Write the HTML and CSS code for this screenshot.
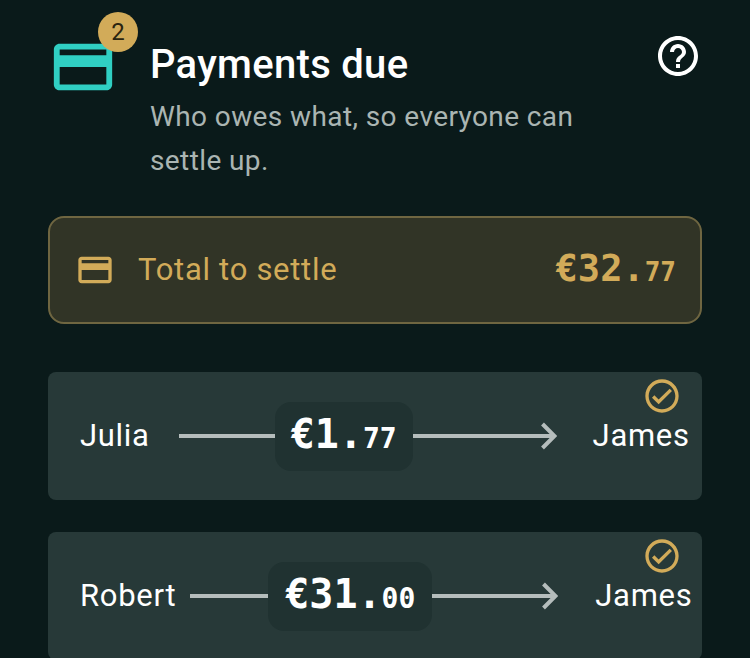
FILE: index.html
```html
<!DOCTYPE html>
<html>
<head>
    <title>Payments due</title>
    <link rel="stylesheet" href="styles.css">
</head>
<body>
    <div class="header">
        <div class="header-icon">
            <svg class="card-icon" viewBox="0 0 24 24" fill="#30cfc3"><path d="M20 4H4c-1.11 0-1.99.89-1.99 2L2 18c0 1.11.89 2 2 2h16c1.11 0 2-.89 2-2V6c0-1.11-.89-2-2-2zm0 14H4v-6h16v6zm0-10H4V6h16v2z"/></svg>
            <span class="badge">2</span>
        </div>
        <div class="header-text">
            <h1>Payments due</h1>
            <p>Who owes what, so everyone can settle up.</p>
        </div>
        <svg class="help-icon" viewBox="0 0 24 24" fill="#fff"><path d="M11 18h2v-2h-2v2zm1-16C6.48 2 2 6.48 2 12s4.48 10 10 10 10-4.48 10-10S17.52 2 12 2zm0 18c-4.41 0-8-3.59-8-8s3.59-8 8-8 8 3.59 8 8-3.59 8-8 8zm0-14c-2.21 0-4 1.79-4 4h2c0-1.1.9-2 2-2s2 .9 2 2c0 2-3 1.75-3 5h2c0-2.25 3-2.5 3-5 0-2.21-1.79-4-4-4z"/></svg>
    </div>

    <div class="total">
        <svg class="total-icon" viewBox="0 0 24 24" fill="#d2ab59"><path d="M20 4H4c-1.11 0-1.99.89-1.99 2L2 18c0 1.11.89 2 2 2h16c1.11 0 2-.89 2-2V6c0-1.11-.89-2-2-2zm0 14H4v-6h16v6zm0-10H4V6h16v2z"/></svg>
        <span class="total-label">Total to settle</span>
        <span class="total-amount">€32.<small>77</small></span>
    </div>

    <div class="payment payment-julia">
        <svg class="check" viewBox="0 0 24 24" fill="#d2ab59"><path d="M12 2C6.48 2 2 6.48 2 12s4.48 10 10 10 10-4.48 10-10S17.52 2 12 2zm0 18c-4.41 0-8-3.59-8-8s3.59-8 8-8 8 3.59 8 8-3.59 8-8 8zm4.59-12.42L10 14.17l-2.59-2.58L6 13l4 4 8-8z"/></svg>
        <span class="name">Julia</span>
        <span class="line"></span>
        <span class="amount">€1.<small>77</small></span>
        <span class="arrow"><span class="line"></span><svg viewBox="0 0 16 28" fill="none" stroke="#b5bdbc" stroke-width="4"><path d="M1.500 2 L13.500 14 L1.500 26"/></svg></span>
        <span class="name">James</span>
    </div>

    <div class="payment payment-robert">
        <svg class="check" viewBox="0 0 24 24" fill="#d2ab59"><path d="M12 2C6.48 2 2 6.48 2 12s4.48 10 10 10 10-4.48 10-10S17.52 2 12 2zm0 18c-4.41 0-8-3.59-8-8s3.59-8 8-8 8 3.59 8 8-3.59 8-8 8zm4.59-12.42L10 14.17l-2.59-2.58L6 13l4 4 8-8z"/></svg>
        <span class="name">Robert</span>
        <span class="line"></span>
        <span class="amount">€31.<small>00</small></span>
        <span class="arrow"><span class="line"></span><svg viewBox="0 0 16 28" fill="none" stroke="#b5bdbc" stroke-width="4"><path d="M1.500 2 L13.500 14 L1.500 26"/></svg></span>
        <span class="name">James</span>
    </div>
</body>
</html>
```

FILE: styles.css
```css
html {
    overflow: hidden;
}
body {
    margin: 0;
    padding: 32px 48px 0;
    background-color: #0a1a1a;
    font-family: Roboto, sans-serif;
    color: #fff;
}
.header {
    display: flex;
    align-items: flex-start;
    margin-bottom: 33px;
}
.header-icon {
    position: relative;
    width: 70px;
    height: 70px;
    flex-shrink: 0;
}
.card-icon {
    display: block;
    width: 70px;
    height: 70px;
}
.badge {
    position: absolute;
    top: -20px;
    left: 50px;
    width: 40px;
    height: 40px;
    border-radius: 50%;
    background-color: #d2ab59;
    color: #2a2410;
    font-size: 24px;
    line-height: 40px;
    text-align: center;
}
.header-text {
    width: 440px;
    margin-left: 32px;
}
.header-text h1 {
    margin: 8px 0 0;
    font-size: 40px;
    font-weight: 500;
    line-height: 50px;
    letter-spacing: 0.3px;
}
.header-text p {
    margin: 5px 0 0;
    font-size: 28px;
    line-height: 44px;
    letter-spacing: 0.4px;
    color: #aab5b2;
}
.help-icon {
    width: 48px;
    height: 48px;
    margin-left: auto;
}
.total {
    display: flex;
    align-items: center;
    box-sizing: border-box;
    height: 108px;
    padding: 0 24px 0 25px;
    margin-bottom: 48px;
    background-color: #313426;
    border: 2px solid #6f6641;
    border-radius: 16px;
}
.total-icon {
    width: 40px;
    height: 40px;
}
.total-label {
    margin-left: 23px;
    margin-bottom: 2px;
    font-size: 31px;
    letter-spacing: 0.7px;
    color: #d2ab59;
}
.total-amount {
    margin-left: auto;
    margin-bottom: 4px;
    font-family: "DejaVu Sans Mono", monospace;
    font-size: 37px;
    font-weight: 700;
    color: #d2ab59;
}
.total-amount small {
    font-size: 26px;
}
.payment {
    position: relative;
    display: flex;
    align-items: center;
    height: 128px;
    margin-bottom: 32px;
    background-color: #273938;
    border-radius: 8px;
}
.check {
    position: absolute;
    top: 4px;
    right: 20px;
    width: 40px;
    height: 40px;
}
.name {
    font-size: 31px;
    letter-spacing: 0.7px;
    margin-bottom: 2px;
}
.line {
    display: block;
    height: 4px;
    background-color: #b5bdbc;
}
.amount {
    display: block;
    background-color: #203231;
    border-radius: 16px;
    font-family: "DejaVu Sans Mono", monospace;
    font-size: 40px;
    font-weight: 700;
    line-height: 64px;
    padding: 0 16px;
}
.amount small {
    font-size: 28px;
}
.arrow {
    display: flex;
    align-items: center;
}
.arrow .line {
    flex: 1;
    margin-right: -14px;
}
.arrow svg {
    width: 16px;
    height: 28px;
}
.payment-julia {
    padding-left: 32px;
}
.payment-julia > .line {
    width: 96px;
    margin-left: 29px;
}
.payment-julia .arrow {
    width: 144px;
    margin-right: 36px;
}
.payment-robert {
    padding-left: 32px;
}
.payment-robert > .line {
    width: 78px;
    margin-left: 14px;
}
.payment-robert .arrow {
    width: 126px;
    margin-right: 37px;
}
.payment-robert .amount {
    padding: 0 17px;
}
```
